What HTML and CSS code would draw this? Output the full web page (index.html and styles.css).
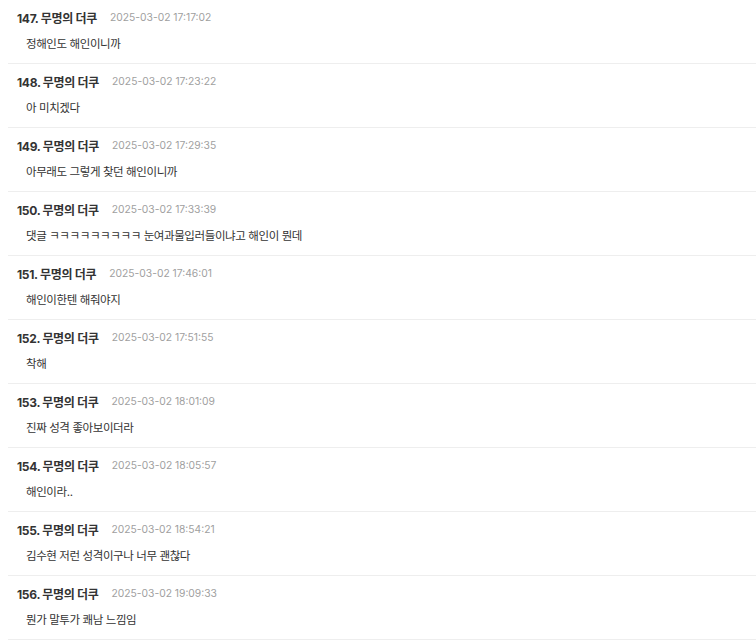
FILE: index.html
```html
<!DOCTYPE html>
<html lang="ko">
<head>
  <meta charset="UTF-8">
  <title>댓글</title>
  <link rel="stylesheet" href="styles.css">
</head>
<body>
  <ul class="comments">
    <li class="comment">
      <div class="meta"><span class="author">147. 무명의 더쿠</span><span class="date">2025-03-02 17:17:02</span></div>
      <p class="text">정해인도 해인이니까</p>
    </li>
    <li class="comment">
      <div class="meta"><span class="author">148. 무명의 더쿠</span><span class="date">2025-03-02 17:23:22</span></div>
      <p class="text">아 미치겠다</p>
    </li>
    <li class="comment">
      <div class="meta"><span class="author">149. 무명의 더쿠</span><span class="date">2025-03-02 17:29:35</span></div>
      <p class="text">아무래도 그렇게 찾던 해인이니까</p>
    </li>
    <li class="comment">
      <div class="meta"><span class="author">150. 무명의 더쿠</span><span class="date">2025-03-02 17:33:39</span></div>
      <p class="text">댓글 ㅋㅋㅋㅋㅋㅋㅋㅋㅋ 눈여과물입러들이냐고 해인이 뭔데</p>
    </li>
    <li class="comment">
      <div class="meta"><span class="author">151. 무명의 더쿠</span><span class="date">2025-03-02 17:46:01</span></div>
      <p class="text">해인이한텐 해줘야지</p>
    </li>
    <li class="comment">
      <div class="meta"><span class="author">152. 무명의 더쿠</span><span class="date">2025-03-02 17:51:55</span></div>
      <p class="text">착해</p>
    </li>
    <li class="comment">
      <div class="meta"><span class="author">153. 무명의 더쿠</span><span class="date">2025-03-02 18:01:09</span></div>
      <p class="text">진짜 성격 좋아보이더라</p>
    </li>
    <li class="comment">
      <div class="meta"><span class="author">154. 무명의 더쿠</span><span class="date">2025-03-02 18:05:57</span></div>
      <p class="text">해인이라..</p>
    </li>
    <li class="comment">
      <div class="meta"><span class="author">155. 무명의 더쿠</span><span class="date">2025-03-02 18:54:21</span></div>
      <p class="text">김수현 저런 성격이구나 너무 괜찮다</p>
    </li>
    <li class="comment">
      <div class="meta"><span class="author">156. 무명의 더쿠</span><span class="date">2025-03-02 19:09:33</span></div>
      <p class="text">뭔가 말투가 쾌남 느낌임</p>
    </li>
  </ul>
</body>
</html>
```

FILE: styles.css
```css
* { box-sizing: border-box; margin: 0; padding: 0; }

body {
  background: #fff;
  font-family: Inter, "Noto Sans CJK KR", sans-serif;
  color: #333;
}

.comments {
  list-style: none;
  padding-left: 8px;
}

.comment {
  padding: 9px 9px;
  border-bottom: 1px solid #eeeeee;
}

.meta {
  display: flex;
  align-items: center;
  height: 16px;
}

.author {
  font-size: 12px;
  font-weight: bold;
  letter-spacing: -0.3px;
  color: #333;
}

.date {
  margin-left: 13px;
  font-size: 10.3px;
  color: #a0a0a0;
}

.text {
  margin-top: 9px;
  padding-left: 9px;
  font-size: 11.5px;
  letter-spacing: -0.4px;
  line-height: 20px;
  color: #333;
}
```
